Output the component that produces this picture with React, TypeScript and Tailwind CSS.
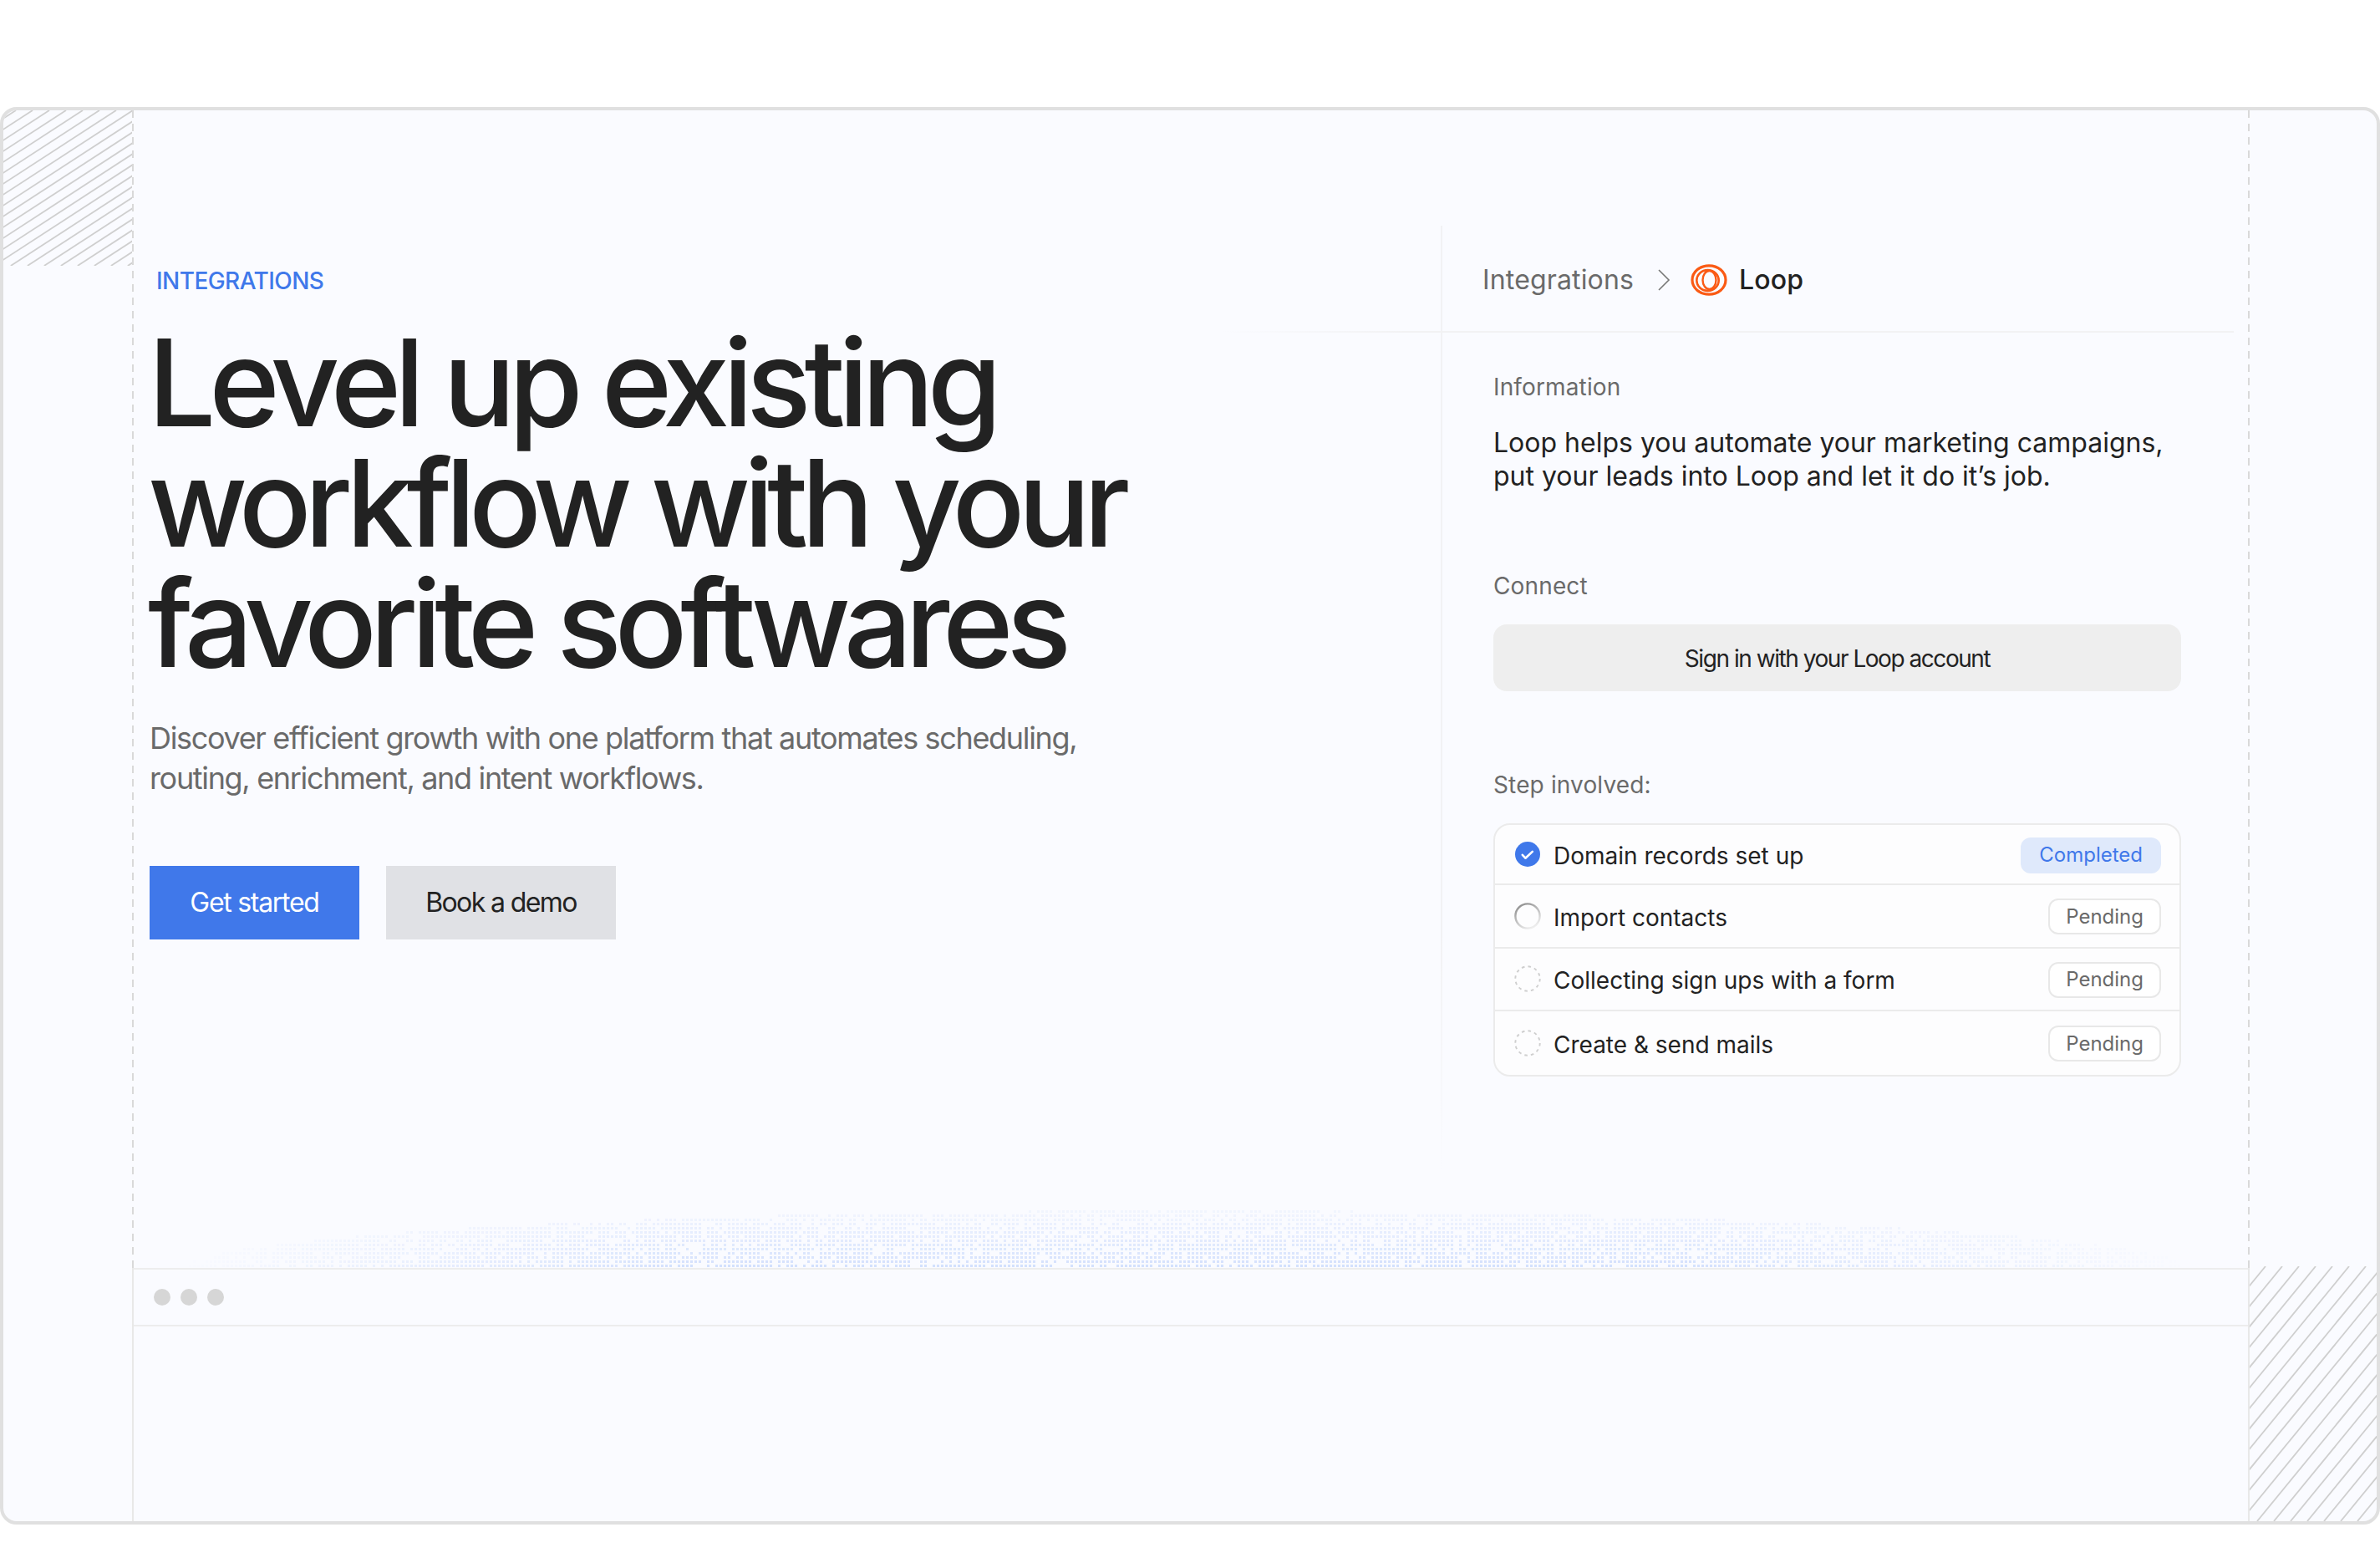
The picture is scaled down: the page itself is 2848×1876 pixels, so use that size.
const font = "font-['Inter',sans-serif]";

function Hatch({ w, h, slope, step, start }: { w: number; h: number; slope: number; step: number; start: number }) {
  const lines = [];
  const span = h / slope;
  for (let x = start; x < w + span; x += step) {
    lines.push(<line key={x} x1={x} y1={0} x2={x - span} y2={h} stroke="#cfcfcf" strokeWidth={1.8} />);
  }
  return (
    <svg width={w} height={h} className="block">
      {lines}
    </svg>
  );
}

function Dither() {
  const w = 2400;
  const h = 70;
  const dots = [];
  let seed = 7;
  const rand = () => {
    seed = (seed * 16807) % 2147483647;
    return seed / 2147483647;
  };
  for (let y = 1; y < h; y += 5) {
    for (let x = 0; x < w; x += 5) {
      const dx = (x - w / 2) / (w / 2);
      const dy = (h - y) / h;
      const r = Math.sqrt(dx * dx + dy * dy);
      const keep = rand();
      if (r >= 1 || keep > 0.78) continue;
      const edge = Math.min(1, (1 - Math.abs(dx)) * 2);
      dots.push(<rect key={`${x}-${y}`} x={x} y={y} width={3} height={3} fill="#bdd1fb" opacity={(0.12 + 0.53 * (y / h)) * edge} />);
    }
  }
  return (
    <svg width={w} height={h} className="absolute left-[56px] bottom-0 block">
      {dots}
    </svg>
  );
}

function LoopLogo() {
  return (
    <svg width="44" height="38" viewBox="0 0 44 38" fill="none" className="block">
      <ellipse cx="22" cy="19" rx="20" ry="17.2" stroke="#fa5a14" strokeWidth="3.2" />
      <ellipse cx="20.5" cy="19.5" rx="13.2" ry="12.4" stroke="#fa5a14" strokeWidth="2.6" />
      <ellipse cx="22.5" cy="19" rx="8" ry="11" stroke="#fa5a14" strokeWidth="2.4" />
    </svg>
  );
}

function StepIcon({ kind }: { kind: string }) {
  if (kind === "done")
    return (
      <svg width="30" height="30" viewBox="0 0 30 30" className="block">
        <circle cx="15" cy="15" r="15" fill="#3f78ea" />
        <path d="M8.8 15.8l3.6 3.9 8.4-7.8" stroke="#fff" strokeWidth="2.6" fill="none" strokeLinecap="round" strokeLinejoin="round" />
      </svg>
    );
  if (kind === "progress")
    return (
      <svg width="32" height="32" viewBox="0 0 32 32" className="block">
        <defs>
          <linearGradient id="spin" x1="0.1" y1="0" x2="0.65" y2="1">
            <stop offset="0" stopColor="#8a8a8a" />
            <stop offset="0.45" stopColor="#b8b8b8" />
            <stop offset="1" stopColor="#eeeeee" />
          </linearGradient>
        </defs>
        <circle cx="16" cy="16" r="14.6" fill="none" stroke="url(#spin)" strokeWidth="2.4" />
      </svg>
    );
  return (
    <svg width="32" height="32" viewBox="0 0 32 32" className="block">
      <circle cx="16" cy="16" r="14.7" fill="none" stroke="#cfcfcf" strokeWidth="1.9" strokeDasharray="3.6 4.1" />
    </svg>
  );
}

const steps = [
  ["done", "Domain records set up", "Completed"],
  ["progress", "Import contacts", "Pending"],
  ["idle", "Collecting sign ups with a form", "Pending"],
  ["idle", "Create & send mails", "Pending"],
];

export default function App() {
  return (
    <div className={`w-[2848px] h-[1876px] bg-white pt-[128px] overflow-hidden ${font}`}>
      <div className="w-[2848px] h-[1696px] rounded-[20px] border-4 border-[#e0e0e0] bg-[#fafbff] flex overflow-hidden">
        <div className="w-[154px] shrink-0">
          <Hatch w={154} h={186} slope={0.65} step={20} start={15} />
        </div>
        <div className="w-[2px] shrink-0 flex flex-col">
          <div className="h-[1385px] bg-[repeating-linear-gradient(to_bottom,#d9d9d9_0,#d9d9d9_9px,transparent_9px,transparent_16px)]" />
          <div className="flex-1 bg-[#e8e8e8]" />
        </div>
        <div className="flex-1 min-w-0 flex flex-col">
          <div className="h-[1385px] relative flex">
            <Dither />
            <div className="w-[1564px] shrink-0 pl-[19px] pt-[186px]">
              <div className="pl-[8px] text-[28px] leading-[36px] font-medium text-[#3f78ea] tracking-[-0.02em]">INTEGRATIONS</div>
              <h1 className="mt-[32px] ml-[-2px] text-[144px] leading-[144px] font-[450] text-[#222222] tracking-[-0.057em]">
                Level up existing
                <br />
                workflow with your
                <br />
                favorite softwares
              </h1>
              <p className="mt-[41px] text-[36px] leading-[48px] text-[#6a6a6a] tracking-[-0.037em]">
                Discover efficient growth with one platform that automates scheduling,
                <br />
                routing, enrichment, and intent workflows.
              </p>
              <div className="mt-[81px] flex gap-[32px]">
                <button className="w-[251px] h-[88px] bg-[#4078ea] text-white text-[32px] tracking-[-0.04em]">Get started</button>
                <button className="w-[275px] h-[88px] bg-[#e0e1e5] text-[#222222] text-[32px] tracking-[-0.05em]">Book a demo</button>
              </div>
            </div>
            <div className="flex-1 relative pt-[138px]">
              <div className="absolute left-0 top-[138px] bottom-[117px] w-[2px] bg-[linear-gradient(to_bottom,#f2f2f4,#f2f2f4_75%,transparent)]" />
              <div className="h-[128px] flex items-center pl-[50px] pt-[2px] gap-[14px] text-[32px] tracking-[0.005em] relative">
                <div className="absolute left-[-262px] right-[17px] bottom-0 h-[2px] bg-[linear-gradient(to_right,transparent,#f2f2f4_18%)]" />
                <span className="text-[#6a6a6a]">Integrations</span>
                <svg width="16" height="28" viewBox="0 0 16 28" className="ml-[14px] mr-[10px]">
                  <path d="M2 2l12 12L2 26" fill="none" stroke="#777" strokeWidth="1.6" />
                </svg>
                <LoopLogo />
                <span className="font-medium text-[#222222]">Loop</span>
              </div>
              <div className="pl-[63px] w-[886px]">
                <div className="mt-[45px] text-[28px] leading-[40px] text-[#6a6a6a] tracking-[0.005em]">Information</div>
                <div className="mt-[27px] text-[32px] leading-[40px] text-[#222222]">
                  Loop helps you automate your marketing campaigns,
                  <br />
                  put your leads into Loop and let it do it’s job.
                </div>
                <div className="mt-[91px] text-[28px] leading-[40px] text-[#6a6a6a] tracking-[0.005em]">Connect</div>
                <button className="mt-[26px] pt-[2px] w-[823px] h-[80px] rounded-[16px] bg-[#eeeeee] text-[28px] text-[#222222] tracking-[-0.052em]">
                  Sign in with your Loop account
                </button>
                <div className="mt-[92px] text-[28px] leading-[40px] text-[#6a6a6a] tracking-[0.005em]">Step involved:</div>
                <div className="mt-[26px] w-[823px] rounded-[20px] border-2 border-[#ebebeb] bg-[#fdfdfe] divide-y-2 divide-[#ebebeb]">
                  {steps.map(([kind, label, status]) => (
                    <div key={label} className="h-[75.5px] first:h-[72px] flex items-center pl-[22px] pr-[22px]">
                      <div className="w-[34px] flex justify-center shrink-0">
                        <StepIcon kind={kind} />
                      </div>
                      <span className="ml-[14px] pt-[4px] text-[28px] text-[#222222]">{label}</span>
                      {status === "Completed" ? (
                        <span className="ml-auto mt-[2px] h-[43px] px-[22px] flex items-center rounded-[12px] bg-[#dfe9fb] text-[24px] text-[#3f78ea]">{status}</span>
                      ) : (
                        <span className="ml-auto mt-[2px] h-[43px] px-[19px] flex items-center rounded-[12px] border-2 border-[#e8e8e8] bg-white text-[24px] text-[#6a6a6a]">{status}</span>
                      )}
                    </div>
                  ))}
                </div>
              </div>
            </div>
          </div>
          <div className="h-[70px] border-y-2 border-[#ededed] flex items-center pl-[24px] gap-[12px]">
            <span className="w-[20px] h-[20px] rounded-full bg-[#d6d6d6]" />
            <span className="w-[20px] h-[20px] rounded-full bg-[#d6d6d6]" />
            <span className="w-[20px] h-[20px] rounded-full bg-[#d6d6d6]" />
          </div>
          <div className="flex-1" />
        </div>
        <div className="w-[2px] shrink-0 flex flex-col">
          <div className="h-[1385px] bg-[repeating-linear-gradient(to_bottom,#d9d9d9_0,#d9d9d9_9px,transparent_9px,transparent_16px)]" />
          <div className="flex-1 bg-[#e8e8e8]" />
        </div>
        <div className="w-[152px] shrink-0 flex flex-col justify-end">
          <Hatch w={152} h={305} slope={1.22} step={20} start={19} />
        </div>
      </div>
    </div>
  );
}
